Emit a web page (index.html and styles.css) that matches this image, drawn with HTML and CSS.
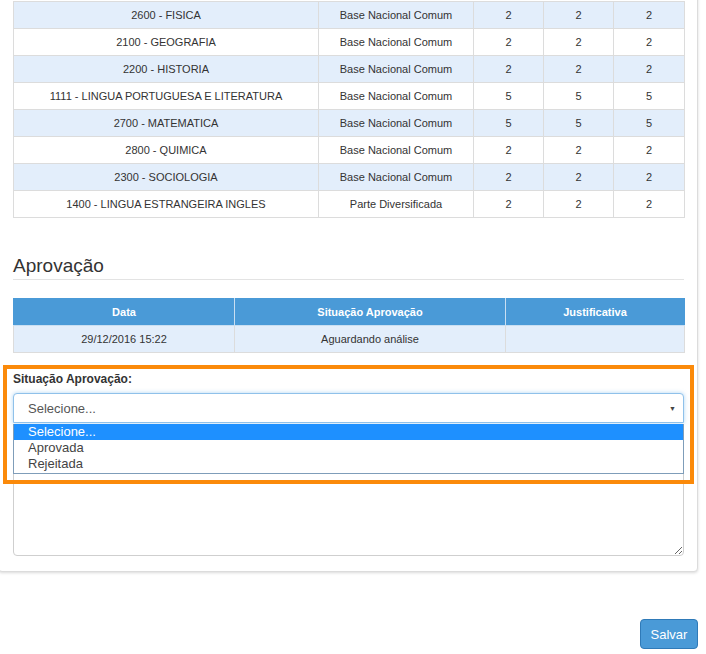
FILE: index.html
```html
<!DOCTYPE html>
<html lang="pt-BR">
<head>
<meta charset="utf-8">
<title>Aprovação</title>
<link rel="stylesheet" href="styles.css">
</head>
<body>
<div class="panel">
  <table class="grid">
    <colgroup><col class="c1"><col class="c2"><col class="c3"><col class="c3"><col class="c4"></colgroup>
    <tbody>
      <tr class="odd"><td>2600 - FISICA</td><td>Base Nacional Comum</td><td>2</td><td>2</td><td>2</td></tr>
      <tr><td>2100 - GEOGRAFIA</td><td>Base Nacional Comum</td><td>2</td><td>2</td><td>2</td></tr>
      <tr class="odd"><td>2200 - HISTORIA</td><td>Base Nacional Comum</td><td>2</td><td>2</td><td>2</td></tr>
      <tr><td>1111 - LINGUA PORTUGUESA E LITERATURA</td><td>Base Nacional Comum</td><td>5</td><td>5</td><td>5</td></tr>
      <tr class="odd"><td>2700 - MATEMATICA</td><td>Base Nacional Comum</td><td>5</td><td>5</td><td>5</td></tr>
      <tr><td>2800 - QUIMICA</td><td>Base Nacional Comum</td><td>2</td><td>2</td><td>2</td></tr>
      <tr class="odd"><td>2300 - SOCIOLOGIA</td><td>Base Nacional Comum</td><td>2</td><td>2</td><td>2</td></tr>
      <tr><td>1400 - LINGUA ESTRANGEIRA INGLES</td><td>Parte Diversificada</td><td>2</td><td>2</td><td>2</td></tr>
    </tbody>
  </table>

  <h4 class="section-title">Aprovação</h4>

  <table class="grid approval">
    <colgroup><col class="a1"><col class="a2"><col class="a3"></colgroup>
    <thead>
      <tr><th>Data</th><th>Situação Aprovação</th><th>Justificativa</th></tr>
    </thead>
    <tbody>
      <tr class="odd"><td>29/12/2016 15:22</td><td>Aguardando análise</td><td></td></tr>
    </tbody>
  </table>

  <label class="field-label">Situação Aprovação:</label>
  <div class="select-wrap">
    <div class="select">
      <span class="select-value">Selecione...</span>
      <span class="select-arrow">&#9660;</span>
    </div>
    <ul class="options">
      <li class="selected">Selecione...</li>
      <li>Aprovada</li>
      <li>Rejeitada</li>
    </ul>
  </div>
  <textarea class="justify"></textarea>
</div>

<div class="actions">
  <button class="btn">Salvar</button>
</div>

<div class="highlight"></div>
</body>
</html>
```

FILE: styles.css
```css
html, body {
  margin: 0;
  padding: 0;
  background: #fff;
}
body {
  font-family: "Liberation Sans", Arial, sans-serif;
  color: #333;
  position: relative;
  width: 706px;
  height: 654px;
  overflow: hidden;
}
.panel {
  margin-left: -2px;
  margin-top: -13px;
  width: 671px;
  padding: 13px 13px 15px 14px;
  border: 1px solid #dcdcdc;
  border-radius: 4px;
  background: #fff;
  box-shadow: 0 1px 3px rgba(0, 0, 0, 0.15);
}
.grid {
  width: 671px;
  border-collapse: collapse;
  table-layout: fixed;
  font-size: 11px;
}
.grid col.c1 { width: 305px; }
.grid col.c2 { width: 155px; }
.grid col.c3 { width: 70px; }
.grid col.c4 { width: 71px; }
.grid td, .grid th {
  border: 1px solid #dcdcdc;
  height: 26px;
  padding: 0 4px;
  text-align: center;
  vertical-align: middle;
  white-space: nowrap;
  overflow: hidden;
}
.grid td { color: #333; }
.grid tr.odd td { background: #e3eefb; }

.section-title {
  margin: 37px 0 0 0;
  padding: 0 0 3px 0;
  font-size: 19px;
  line-height: 21px;
  font-weight: normal;
  color: #333;
  border-bottom: 1px solid #e3e3e3;
}

.approval { margin-top: 18px; }
.approval col.a1 { width: 221px; }
.approval col.a2 { width: 271px; }
.approval col.a3 { width: 179px; }
.approval th {
  background: #4a9ad7;
  color: #fff;
  font-weight: bold;
  border-color: #c9dff2;
  border-top-color: #4a9ad7;
}
.approval th:first-child { border-left-color: #4a9ad7; }
.approval th:last-child { border-right-color: #4a9ad7; }

.field-label {
  display: block;
  margin-top: 18px;
  font-size: 12px;
  line-height: 17px;
  font-weight: bold;
  color: #333;
}
.select-wrap {
  position: relative;
  margin-top: 5px;
}
.select {
  height: 28px;
  border: 1px solid #8fc1ea;
  border-radius: 4px 4px 0 0;
  box-shadow: 0 0 4px rgba(102, 175, 233, 0.5);
  display: flex;
  align-items: center;
  justify-content: space-between;
  padding: 0 7px 0 14px;
  font-size: 13px;
  color: #555;
  background: #fff;
}
.select-arrow {
  font-size: 7px;
  color: #444;
}
.options {
  position: absolute;
  left: 0;
  right: 0;
  top: 31px;
  margin: 0;
  padding: 0 0 1px 0;
  list-style: none;
  border: 1px solid #7f9db9;
  border-top: none;
  background: #fff;
  z-index: 2;
}
.options li {
  height: 16px;
  line-height: 16px;
  padding-left: 14px;
  font-size: 13px;
  color: #444;
}
.options li.selected {
  background: #1e90ff;
  color: #fff;
}
.justify {
  display: block;
  box-sizing: border-box;
  width: 671px;
  height: 118px;
  margin-top: 15px;
  border: 1px solid #cfcfcf;
  border-radius: 4px;
  resize: vertical;
  font-family: inherit;
}

.actions {
  display: flex;
  justify-content: flex-end;
  padding-right: 8px;
  margin-top: 47px;
}
.btn {
  width: 58px;
  height: 30px;
  padding: 0;
  border: 1px solid #2f7ab8;
  border-radius: 4px;
  background: #4a9ad7;
  color: #fff;
  font-family: "Liberation Sans", Arial, sans-serif;
  font-size: 13px;
}

.highlight {
  position: absolute;
  left: 3px;
  top: 365px;
  width: 683px;
  height: 111px;
  border: 4px solid #fb8a0a;
  z-index: 5;
  pointer-events: none;
}
```
